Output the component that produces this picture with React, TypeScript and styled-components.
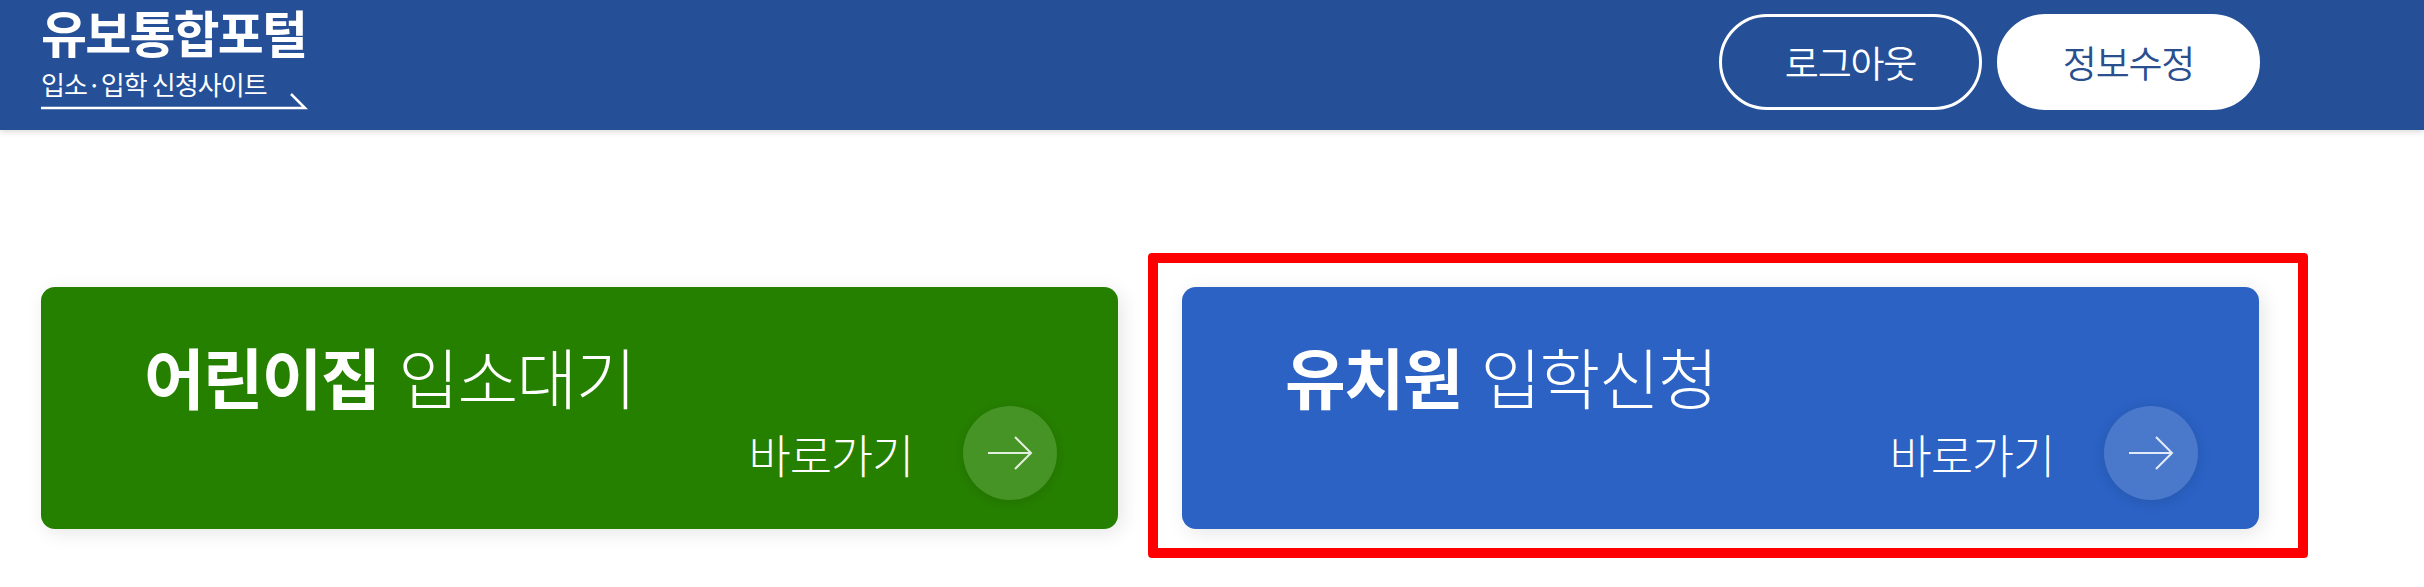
import styled, { createGlobalStyle } from "styled-components";

const GlobalStyle = createGlobalStyle`
  html, body {
    margin: 0;
    padding: 0;
    background: #fff;
    font-family: "Noto Sans CJK KR", "Noto Sans", sans-serif;
  }
  * {
    box-sizing: border-box;
  }
`;

const Page = styled.div`
  position: relative;
  width: 2424px;
  height: 587px;
  overflow: hidden;
`;

const Header = styled.header`
  display: flex;
  align-items: flex-start;
  justify-content: space-between;
  height: 130px;
  padding: 0 164px 0 41px;
  background-color: #254f97;
  box-shadow: 0 2px 6px rgba(0, 0, 0, 0.15);
`;

const Logo = styled.div`
  display: flex;
  flex-direction: column;
  width: 266px;
  padding-top: 3px;
  color: #fff;
`;

const LogoTitle = styled.div`
  height: 56px;
  font-size: 50px;
  font-weight: 700;
  line-height: 56px;
  letter-spacing: -1.8px;
  white-space: nowrap;
`;

const LogoSub = styled.div`
  height: 38px;
  margin-top: 6px;
  font-size: 26px;
  font-weight: 400;
  line-height: 38px;
  letter-spacing: -0.9px;
  white-space: nowrap;
`;

const LogoLine = styled.svg`
  display: block;
  margin-top: -11px;
`;

const Buttons = styled.div`
  display: flex;
  gap: 15px;
  padding-top: 14px;
`;

const PillButton = styled.button<{ $filled?: boolean }>`
  width: 263px;
  height: 96px;
  padding: 0;
  border: 3px solid #fff;
  border-radius: 48px;
  background-color: ${(props) => (props.$filled ? "#fff" : "transparent")};
  color: ${(props) => (props.$filled ? "#2a4f8f" : "#fff")};
  font-family: inherit;
  font-size: 37px;
  font-weight: 350;
  letter-spacing: -1.2px;
`;

const Cards = styled.main`
  display: flex;
  gap: 64px;
  padding: 157px 0 0 41px;
`;

const Card = styled.a<{ $color: string }>`
  display: flex;
  flex-direction: column;
  justify-content: space-between;
  width: 1077px;
  height: 242px;
  padding: 59px 61px 29px 103px;
  border-radius: 14px;
  background-color: ${(props) => props.$color};
  box-shadow: 4px 4px 20px rgba(0, 0, 0, 0.1);
  color: #fff;
`;

const CardTitle = styled.div`
  font-size: 66px;
  font-weight: 300;
  line-height: 58px;
  letter-spacing: -1.6px;
  word-spacing: 6px;
  white-space: nowrap;
  strong {
    font-weight: 700;
    letter-spacing: -1.9px;
  }
`;

const CardLink = styled.div`
  display: flex;
  align-items: center;
  justify-content: flex-end;
  gap: 50px;
  font-size: 46px;
  font-weight: 300;
  letter-spacing: -1.2px;
`;

const ArrowCircle = styled.span`
  display: flex;
  align-items: center;
  justify-content: center;
  width: 94px;
  height: 94px;
  border-radius: 50%;
  background-color: rgba(255, 255, 255, 0.15);
  box-shadow: 0 2px 14px rgba(0, 0, 0, 0.12);
`;

const RedBox = styled.div`
  position: absolute;
  left: 1148px;
  top: 253px;
  width: 1160px;
  height: 305px;
  border: 10px solid #ff0000;
  border-radius: 4px;
  pointer-events: none;
`;

function Arrow() {
  return (
    <svg width="46" height="36" viewBox="0 0 46 36" fill="none">
      <path d="M1 18H44M28 2L44 18L28 34" stroke="#fff" strokeWidth="2" opacity="0.85" />
    </svg>
  );
}

function App() {
  return (
    <Page>
      <GlobalStyle />
      <Header>
        <Logo>
          <LogoTitle>유보통합포털</LogoTitle>
          <LogoSub>입소·입학 신청사이트</LogoSub>
          <LogoLine width="268" height="18" viewBox="0 0 268 18" fill="none">
            <path d="M0 16H264L250 2" stroke="#fff" strokeWidth="2.5" />
          </LogoLine>
        </Logo>
        <Buttons>
          <PillButton>로그아웃</PillButton>
          <PillButton $filled>정보수정</PillButton>
        </Buttons>
      </Header>
      <Cards>
        <Card $color="#268000">
          <CardTitle>
            <strong>어린이집</strong> 입소대기
          </CardTitle>
          <CardLink>
            바로가기
            <ArrowCircle>
              <Arrow />
            </ArrowCircle>
          </CardLink>
        </Card>
        <Card $color="#2b62c4">
          <CardTitle>
            <strong>유치원</strong> 입학신청
          </CardTitle>
          <CardLink>
            바로가기
            <ArrowCircle>
              <Arrow />
            </ArrowCircle>
          </CardLink>
        </Card>
      </Cards>
      <RedBox />
    </Page>
  );
}

export default App;
